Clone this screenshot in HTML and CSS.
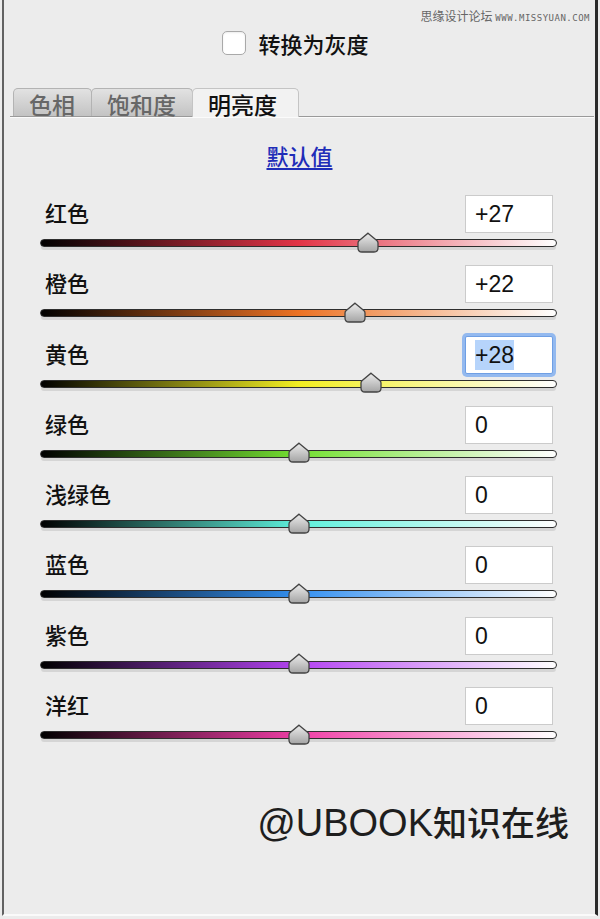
FILE: index.html
```html
<!DOCTYPE html>
<html lang="zh-CN">
<head>
    <meta charset="UTF-8">
    <meta name="viewport" content="width=device-width, initial-scale=1.0">
    <title>明亮度</title>
    <link rel="stylesheet" href="styles.css">
</head>
<body>
    <svg class="defs" width="0" height="0">
        <defs>
            <linearGradient id="thumb-fill" x1="0" y1="0" x2="0" y2="1">
                <stop offset="0" stop-color="#ececec"/>
                <stop offset="1" stop-color="#a4a4a4"/>
            </linearGradient>
        </defs>
    </svg>

    <div class="panel">
        <div class="site-mark">思缘设计论坛 <span>WWW.MISSYUAN.COM</span></div>

        <label class="gray-toggle"><span class="check"></span>转换为灰度</label>

        <div class="tabs">
            <span class="tab">色相</span>
            <span class="tab">饱和度</span>
            <span class="tab active">明亮度</span>
        </div>

        <div class="defaults"><a href="#">默认值</a></div>

        <div class="rows" id="rows"></div>

        <div class="credit"><span class="latin">@UBOOK</span>知识在线</div>
    </div>

    <script>
        const channels = [
            { name: '红色', value: 27, color: '#e23446' },
            { name: '橙色', value: 22, color: '#ec7224' },
            { name: '黄色', value: 28, color: '#f2ee22', focused: true },
            { name: '绿色', value: 0, color: '#74e032' },
            { name: '浅绿色', value: 0, color: '#5ef0dc' },
            { name: '蓝色', value: 0, color: '#3490f0' },
            { name: '紫色', value: 0, color: '#b443f2' },
            { name: '洋红', value: 0, color: '#f03ea6' },
        ];

        const rows = document.getElementById('rows');

        channels.forEach(ch => {
            const text = ch.value > 0 ? '+' + ch.value : String(ch.value);
            const pos = 50 + ch.value / 2;
            const row = document.createElement('div');
            row.classList.add('row');
            row.innerHTML = `
                <div class="row-head">
                    <span class="label">${ch.name}</span>
                    <span class="value${ch.focused ? ' focused' : ''}"><span class="num">${text}</span></span>
                </div>
                <div class="track" style="--c: ${ch.color}">
                    <svg class="thumb" style="left: ${pos}%" viewBox="0 0 22 21" width="22" height="21">
                        <path d="M11 1.2 L19.8 8.6 Q21 9.6 21 11 L21 16 Q21 20 17 20 L5 20 Q1 20 1 16 L1 11 Q1 9.6 2.2 8.6 Z"
                              fill="url(#thumb-fill)" stroke="#434343" stroke-width="1.3"/>
                    </svg>
                </div>
            `;
            rows.appendChild(row);
        });
    </script>
</body>
</html>
```

FILE: styles.css
```css
body {
    margin: 0;
    background: #ececec;
    font-family: "Noto Sans CJK SC", "Liberation Sans", sans-serif;
    color: #111;
}

.defs {
    position: absolute;
}

.panel {
    position: relative;
    margin-left: 2px;
    width: 591px;
    height: 914px;
    border-left: 2px solid #626262;
    border-right: 3px solid #2a2a2a;
    border-bottom: 2px solid #fafafa;
    background: #ececec;
    overflow: hidden;
}

/* watermark in the corner */
.site-mark {
    position: absolute;
    top: 8px;
    right: 5px;
    font-size: 12px;
    color: #666;
    line-height: 16px;
}

.site-mark span {
    font-family: "DejaVu Sans Mono", monospace;
    font-size: 9px;
    letter-spacing: 0.5px;
}

.gray-toggle {
    display: flex;
    justify-content: center;
    align-items: center;
    gap: 12px;
    margin-top: 31px;
    padding-right: 8px;
    height: 24px;
    font-size: 22px;
    font-weight: 500;
    line-height: 24px;
}

.check {
    width: 22px;
    height: 22px;
    border: 1px solid #a9a9a9;
    border-radius: 5px;
    background: #fff;
    box-shadow: inset 0 1px 2px rgba(0, 0, 0, 0.08);
}

.tabs {
    display: flex;
    margin: 33px 1px 0 6px;
    padding-left: 3px;
    height: 28px;
    border-bottom: 1px solid #9a9a9a;
    box-shadow: 0 1px 0 #fbfbfb;
}

.tab {
    height: 27px;
    padding: 0 16px 0 15px;
    border: 1px solid #b3b3b3;
    border-bottom: none;
    border-radius: 5px 5px 0 0;
    background: linear-gradient(#e2e2e2, #c3c3c3);
    color: #676767;
    font-size: 23px;
    font-weight: 500;
    line-height: 30px;
    margin-right: -1px;
}

.tab.active {
    position: relative;
    height: 28px;
    margin-bottom: -1px;
    padding-right: 21px;
    background: #f2f2f2;
    border-color: #c4c4c4;
    color: #111;
}

.defaults {
    margin-top: 25px;
    text-align: center;
    font-size: 22px;
    font-weight: 500;
    line-height: 26px;
}

.defaults a {
    color: #1f2db8;
    text-decoration: underline;
    text-underline-offset: 3px;
}

.rows {
    margin-top: 27px;
    padding-left: 36px;
    width: 517px;
}

.row {
    height: 70.3px;
}

.row-head {
    display: flex;
    justify-content: space-between;
    align-items: center;
    height: 38px;
    padding: 0 4px 0 5px;
}

.label {
    font-size: 22px;
    font-weight: 500;
    line-height: 26px;
    margin-top: -4px;
}

.value {
    box-sizing: border-box;
    width: 88px;
    height: 38px;
    padding-left: 9px;
    background: #fff;
    border: 1px solid #cbcbcb;
    font-family: "Liberation Sans", Arial, sans-serif;
    font-size: 23px;
    line-height: 36px;
}

.value.focused {
    border-color: #6f9fe4;
    box-shadow: 0 0 0 3px #93b9ef;
    border-radius: 2px;
}

.value.focused .num {
    background: #b6d4fb;
    padding: 2px 0;
}

.track {
    position: relative;
    box-sizing: border-box;
    margin-top: 6px;
    height: 8px;
    border: 1.5px solid #2e2e2e;
    border-radius: 4px;
    background: linear-gradient(to right, #000, var(--c) 50%, #fff);
    box-shadow: 0 4px 0 -1px #d5d5d5;
}

.thumb {
    position: absolute;
    top: -8.5px;
    margin-left: -11px;
}

.credit {
    margin-top: 46px;
    padding-right: 26px;
    text-align: right;
    font-family: "Liberation Sans", "Noto Sans CJK SC", sans-serif;
    font-size: 34px;
    font-weight: 500;
    line-height: 40px;
    color: #1e1e1e;
}

.credit .latin {
    font-size: 38px;
    font-weight: normal;
}
```
